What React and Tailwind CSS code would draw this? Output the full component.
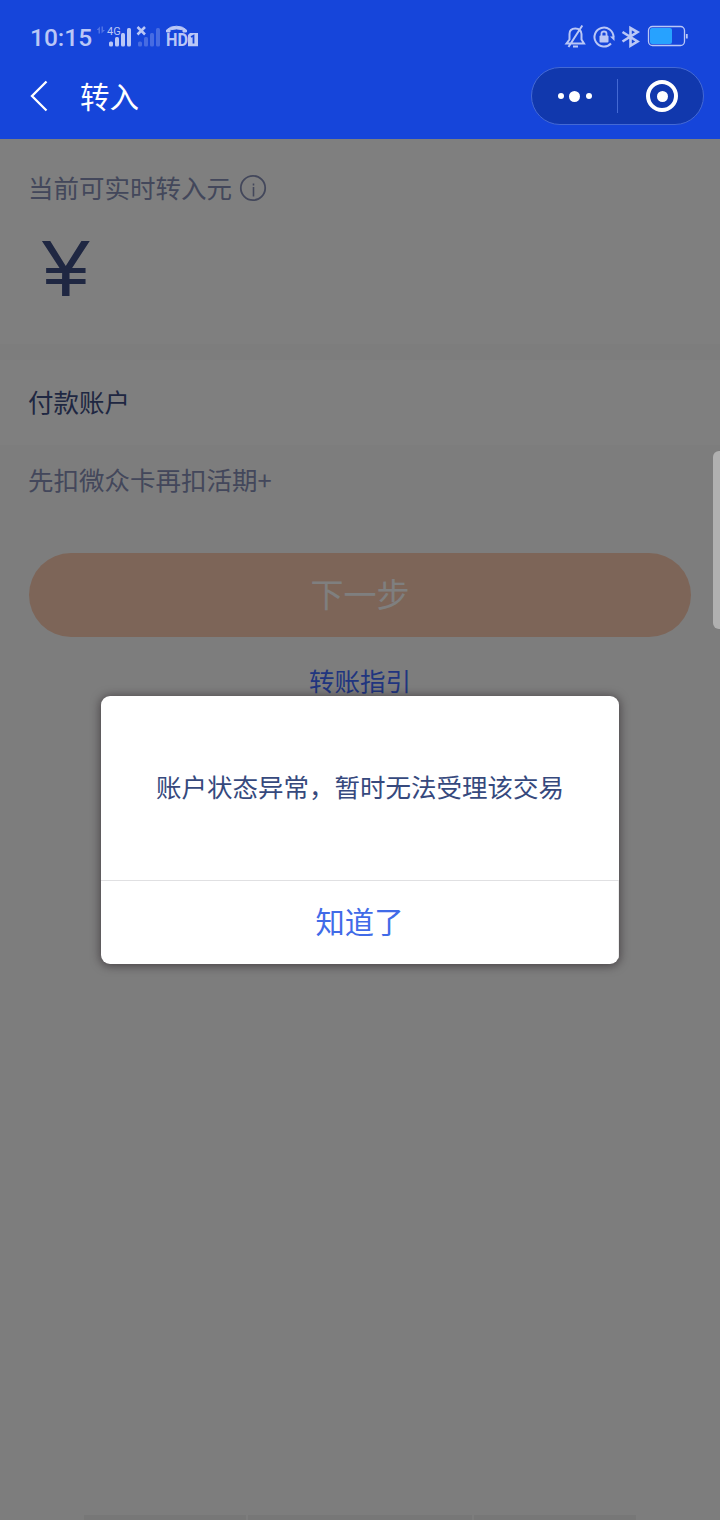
import React, { useState } from "react";

function SignalIcons() {
  return (
    <svg width="104" height="26" viewBox="0 0 104 26" className="ml-[5px] text-[#bac7f6]" fill="currentColor">
      {/* data arrows */}
      <path d="M3 2.5 L-0.500 6 H1.500 V9.500 H3 Z M4.500 2.500 V9.500 L8 6 H6 V2.500 Z" opacity="0.35" />
      <text x="10" y="11" fontSize="11" fontFamily="Roboto, sans-serif">4G</text>
      {/* SIM 1 */}
      <rect x="12" y="17.500" width="4" height="5" rx="1.5" />
      <rect x="18" y="13" width="4" height="9.500" rx="1.5" />
      <rect x="24" y="9" width="4" height="13.500" rx="1.5" />
      <rect x="30" y="4" width="4" height="18.500" rx="1.5" />
      {/* SIM 2, no service */}
      <path d="M40.500 3 L48 10.500 M48 3 L40.500 10.500" stroke="currentColor" strokeWidth="2.5" />
      <g opacity="0.3">
        <rect x="41" y="17.500" width="4" height="5" rx="1.5" />
        <rect x="47" y="13" width="4" height="9.500" rx="1.5" />
        <rect x="53" y="9" width="4" height="13.500" rx="1.5" />
        <rect x="59" y="4" width="4" height="18.500" rx="1.5" />
      </g>
      {/* HD call */}
      <path d="M69.500 8 V6 Q73 2.200 79.500 2.200 T89.500 6 V8 H86 V5.800 Q79.500 4 73 5.800 V8 Z" stroke="currentColor" strokeWidth="1" />
      <text x="69" y="22.300" fontSize="18" fontWeight="700" fontFamily="Roboto, sans-serif" textLength="22" lengthAdjust="spacingAndGlyphs">HD</text>
      <path d="M93 9 H101 V22.300 H91 V11 Z" />
      <path d="M94 13 L96.500 11.700 V19.500" fill="none" stroke="#1645da" strokeWidth="1.8" />
    </svg>
  );
}

function SystemIcons() {
  return (
    <svg width="124" height="26" viewBox="0 0 124 26" className="ml-auto text-[#bac7f6]" fill="none" stroke="currentColor" strokeWidth="2">
      {/* muted bell */}
      <path d="M2.500 19.500 H20 L17.500 15.500 V10 Q17 4.500 11.300 4.500 Q5.500 4.500 5.500 10 V15.500 Z M18.300 1.500 L4.500 23 M9 22.500 H14" />
      {/* rotation lock */}
      <path d="M47 19.500 A9.500 9.500 0 1 1 49.500 13" />
      <path d="M46 12.500 H50.500 V17 Z" fill="currentColor" stroke="none" />
      <rect x="35.500" y="11.500" width="9" height="7" rx="1" fill="currentColor" stroke="none" />
      <path d="M37.500 12 V9.500 Q37.500 7.500 40 7.500 Q42.500 7.500 42.500 9.500 V12" strokeWidth="1.800" />
      {/* bluetooth */}
      <path d="M58.500 8 L73.500 17.500 L66.500 21.800 V4 L73.500 8 L58.500 17.500" strokeWidth="2.600" />
      {/* battery */}
      <rect x="84.500" y="2.500" width="36" height="19" rx="4" strokeWidth="1.300" />
      <rect x="86" y="4" width="22" height="16" rx="2" fill="#27a2ff" stroke="none" />
      <path d="M122.800 10 V14.500" strokeWidth="1.800" />
    </svg>
  );
}

function Header() {
  return (
    <header className="h-[139px] bg-[#1645da] text-white">
      <div className="flex h-[67px] items-start pt-6 pl-[30px] pr-8">
        <span className="w-[62px] whitespace-nowrap font-[Roboto,sans-serif] text-[24.5px] font-medium leading-[28px] text-[#bac7f6]">10:15</span>
        <SignalIcons />
        <SystemIcons />
      </div>

      <div className="flex h-[58px] items-center pl-[30px] pr-4">
        <svg width="18" height="32" viewBox="0 0 18 32" fill="none" stroke="currentColor" strokeWidth="2.3">
          <path d="M16.500 1.500 L2 16 L16.500 30.500" />
        </svg>
        <h1 className="ml-8 pb-0.5 text-[29.5px] leading-[44px]">转入</h1>

        <div className="ml-auto flex h-[58px] w-[173px] items-center rounded-full border border-[#4469d4] bg-[#1138ad]">
          <div className="flex w-[85px] items-center justify-center gap-[5.5px]">
            <span className="size-1.5 rounded-full bg-white"></span>
            <span className="size-[11px] rounded-full bg-white"></span>
            <span className="size-1.5 rounded-full bg-white"></span>
          </div>
          <div className="h-[34px] w-px bg-[#4469d4]"></div>
          <div className="ml-7 flex size-8 items-center justify-center rounded-full border-[4.5px] border-white">
            <span className="size-[11px] rounded-full bg-white"></span>
          </div>
        </div>
      </div>
    </header>
  );
}

function AlertDialog({ onClose }) {
  return (
    <div className="absolute inset-0 bg-black/50">
      <div className="mx-auto mt-[557px] flex h-[268px] w-[518px] flex-col overflow-hidden rounded-[9px] bg-white shadow-[0_1px_10px_1px_rgba(30,20,25,0.55)]">
        <p className="flex h-[184px] items-center justify-center whitespace-nowrap pb-[3px] text-[25.5px] text-[#36497d]">
          账户状态异常，暂时无法受理该交易
        </p>
        <button onClick={onClose} className="flex-1 border-t border-r border-t-[#e0e0e2] border-r-[#eeeeee] pb-1 text-[29.3px] text-[#416be8]">
          知道了
        </button>
      </div>
    </div>
  );
}

export default function App() {
  const [open, setOpen] = useState(true);

  return (
    <div className="flex h-[1520px] w-[720px] flex-col overflow-hidden font-['Noto_Sans_CJK_SC',sans-serif]">
      <Header />

      <main className="relative flex flex-1 flex-col bg-[#fafafa]">
        {/* amount */}
        <section className="h-[205px] bg-white px-7 pt-[30px]">
          <div className="flex h-[38px] items-center text-[25.5px] leading-[36px] text-[#868fb6]">
            <span className="pb-0.5">当前可实时转入元</span>
            <svg width="28" height="28" viewBox="0 0 28 28" className="ml-[7px]" fill="none" stroke="currentColor" strokeWidth="1.8">
              <circle cx="14" cy="14" r="12.2" />
              <path d="M14.500 13 V22.500 M14.500 9.500 V11.500" strokeWidth="1.600" />
            </svg>
          </div>
          <div className="mt-[22px] ml-[13.5px] origin-left scale-x-[1.07] font-['Liberation_Sans',sans-serif] text-[80px] leading-[80px] text-[#3e4e84]">¥</div>
        </section>

        {/* payment account */}
        <section className="mt-4 flex h-[85px] items-center bg-white px-7 pb-0.5 text-[25.5px] text-[#3e4e84]">付款账户</section>
        <p className="mt-[15px] px-7 text-[25.5px] leading-[38px] text-[#868fb6]">先扣微众卡再扣活期+</p>

        <button className="mx-[29px] mt-[55px] h-[84px] rounded-full bg-[#facab0] pb-[3px] text-[33px] text-white">下一步</button>
        <a className="mt-[24px] text-center text-[25.5px] leading-[38px] text-[#416aff]">转账指引</a>

        <div className="mt-auto ml-[84px] flex h-[5px] gap-0.5">
          <span className="w-[162px] bg-[#efefef]"></span>
          <span className="w-[224px] bg-[#efefef]"></span>
          <span className="w-[162px] bg-[#efefef]"></span>
        </div>

        {open && <AlertDialog onClose={() => setOpen(false)} />}

        {/* edge handle */}
        <div className="absolute top-[312px] right-0 h-[178px] w-[7px] rounded-l-[6px] bg-[#b0b0b0]"></div>
      </main>
    </div>
  );
}
